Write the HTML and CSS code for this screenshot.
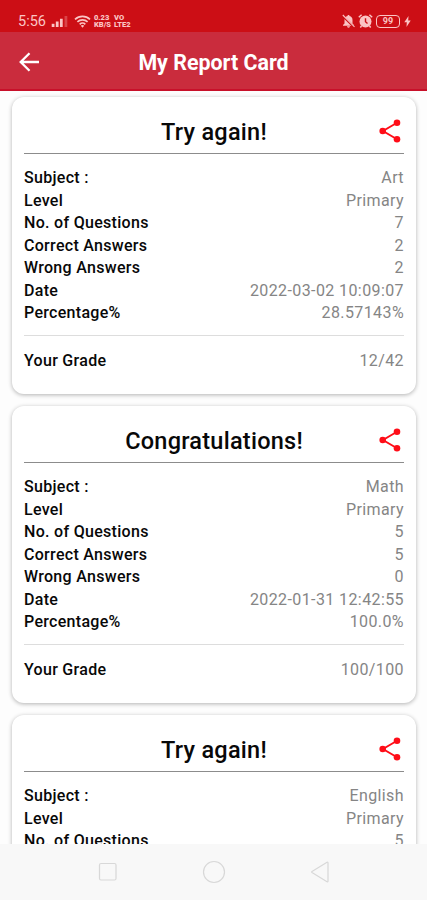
FILE: index.html
```html
<!DOCTYPE html>
<html lang="en">

<head>
    <meta charset="UTF-8">
    <title>My Report Card</title>
    <link rel="stylesheet" href="styles.css">
</head>

<body>
    <div class="status-bar">
        <span class="time">5:56</span>
        <svg class="signal" width="17" height="11" viewBox="0 0 17 12">
            <rect x="0" y="8.500" width="3" height="3.500" />
            <rect x="4.500" y="6" width="3" height="6" />
            <rect x="9" y="3" width="3" height="9" />
            <rect x="14" y="0" width="3" height="12" opacity="0.3" />
        </svg>
        <svg class="wifi" width="17" height="13" viewBox="0 0 17 13">
            <g fill="none" stroke="#fbc4c4" stroke-width="1.700">
                <path d="M1 4.300a11 11 0 0 1 15 0" />
                <path d="M3.400 6.900a7.400 7.400 0 0 1 10.200 0" />
                <path d="M5.700 9.300a4 4 0 0 1 5.600 0" />
            </g>
            <path d="M6.800 10.800a2.400 2.400 0 0 1 3.400 0L8.500 12.800z" />
        </svg>
        <div class="tiny speed"><span>0.23</span><span>KB/S</span></div>
        <div class="tiny lte"><span>VO</span><span>LTE2</span></div>
        <svg class="mute" width="13" height="14" viewBox="0 0 13 14">
            <path d="M6.500 1c.7 0 1 .4 1 1 2 .5 3 2 3 4v3.500l1.500 1.500v.7H1V11l1.500-1.500V6c0-2 1-3.500 3-4 0-.6.3-1 1-1z" />
            <path d="M5 12.300h3c0 .8-.6 1.400-1.500 1.400S5 13.100 5 12.300z" />
            <path d="M.8 2l11.200 11" stroke="#cc0e15" stroke-width="2.200" />
            <path d="M.8 1l11.700 11.800" stroke="#fbc4c4" stroke-width="1.100" />
        </svg>
        <svg class="alarm" width="15" height="14" viewBox="0 0 15 14">
            <circle cx="7.500" cy="7.500" r="6" />
            <path d="M.8 3.300L3.600.8M14.200 3.300L11.400.8M3.500 12L2.300 13.500M11.500 12l1.200 1.500" stroke="#fbc4c4" stroke-width="1.500" />
            <path d="M7.500 4.200v3.600l2 1.700" fill="none" stroke="#cc0e15" stroke-width="1.400" />
        </svg>
        <div class="battery">99</div>
        <svg class="bolt" width="7" height="11" viewBox="0 0 7 11">
            <path d="M4.500 0L.3 6.200h2.500L2.500 11l4.200-6.400H4.200z" />
        </svg>
    </div>

    <header class="app-bar">
        <svg class="back" width="22" height="22" viewBox="0 0 22 22">
            <path d="M21 11H3M11.500 2.200L2.700 11l8.800 8.800" fill="none" stroke="#fff" stroke-width="2.300" />
        </svg>
        <h1>My Report Card</h1>
    </header>

    <main id="reports"></main>

    <nav class="nav-bar">
        <svg width="20" height="20" viewBox="0 0 20 20">
            <rect x="1.500" y="1.500" width="16.500" height="16.500" rx="1.500" />
        </svg>
        <svg width="24" height="24" viewBox="0 0 24 24">
            <circle cx="12" cy="12" r="10.500" />
        </svg>
        <svg width="20" height="22" viewBox="0 0 20 22">
            <path d="M18 1.800v18.400q0 1-1 .5L2 11.600q-.8-.6 0-1.200L17 1.300q1-.5 1 .5z" />
        </svg>
    </nav>

    <script>
        const reports = [
            { title: 'Try again!', subject: 'Art', level: 'Primary', questions: 7, correct: 2, wrong: 2, date: '2022-03-02 10:09:07', percentage: '28.57143%', grade: '12/42' },
            { title: 'Congratulations!', subject: 'Math', level: 'Primary', questions: 5, correct: 5, wrong: 0, date: '2022-01-31 12:42:55', percentage: '100.0%', grade: '100/100' },
            { title: 'Try again!', subject: 'English', level: 'Primary', questions: 5 }
        ];

        const labels = [
            ['subject', 'Subject :'],
            ['level', 'Level'],
            ['questions', 'No. of Questions'],
            ['correct', 'Correct Answers'],
            ['wrong', 'Wrong Answers'],
            ['date', 'Date'],
            ['percentage', 'Percentage%']
        ];

        const shareIcon = `
            <svg class="share" width="22" height="24" viewBox="0 0 22 24">
                <path d="M18 3.800L4 12l14 8.200" fill="none" stroke="#ff0d18" stroke-width="1.900" />
                <circle cx="18" cy="3.800" r="3.300" />
                <circle cx="3.700" cy="12" r="3.300" />
                <circle cx="18" cy="20.200" r="3.300" />
            </svg>`;

        function row(label, value) {
            return `<div class="row"><span class="label">${label}</span><span class="value">${value}</span></div>`;
        }

        function card(report) {
            const rows = labels
                .filter(([key]) => report[key] !== undefined)
                .map(([key, label]) => row(label, report[key]))
                .join('');
            const grade = report.grade ? `<div class="grade">${row('Your Grade', report.grade)}</div>` : '';
            return `
                <section class="card">
                    <div class="card-head"><h2>${report.title}</h2>${shareIcon}</div>
                    <div class="rows">${rows}</div>
                    ${grade}
                </section>`;
        }

        document.getElementById('reports').innerHTML = reports.map(card).join('');
    </script>
</body>

</html>
```
FILE: styles.css
```css
* {
    box-sizing: border-box;
}

body {
    margin: 0;
    height: 900px;
    display: flex;
    flex-direction: column;
    overflow: hidden;
    background-color: #fdfdfd;
    font-family: Roboto, sans-serif;
}

.status-bar {
    display: flex;
    align-items: center;
    flex: none;
    height: 32px;
    padding: 10px 16px 0 18px;
    background-color: #cc0e15;
    color: #fbc4c4;
    fill: #fbc4c4;
}

.time {
    width: 33px;
    font-size: 14.5px;
}

.wifi {
    margin-left: 6px;
}

.tiny {
    display: flex;
    flex-direction: column;
    font-size: 7.5px;
    line-height: 7px;
    font-weight: 900;
}

.speed {
    width: 18px;
    margin-left: 3px;
}

.lte {
    margin-left: 2px;
}

.mute {
    margin-left: auto;
}

.alarm {
    margin-left: 3px;
}

.battery {
    width: 24px;
    height: 13px;
    margin-left: 3px;
    border: 1.5px solid #fbc4c4;
    border-radius: 4px;
    font-size: 9px;
    line-height: 10px;
    font-weight: bold;
    text-align: center;
}

.bolt {
    margin-left: 4px;
}

.app-bar {
    display: grid;
    grid-template-columns: 1fr auto 1fr;
    align-items: center;
    flex: none;
    height: 59px;
    padding: 2px 18px 0;
    background-color: #ca2c3d;
    border-bottom: 2px solid #c8102a;
}

.app-bar h1 {
    margin: 2px 0 0;
    color: #fff;
    font-size: 21.4px;
    font-weight: bold;
}

#reports {
    flex: 1;
    min-height: 0;
    overflow: hidden;
    display: flex;
    flex-direction: column;
    gap: 12px;
    padding: 6px 11px 0 12px;
}

.card {
    flex: none;
    height: 297px;
    padding: 0 12px;
    border-radius: 12px;
    background-color: #fff;
    box-shadow: 0 1px 4px rgba(0, 0, 0, 0.3);
}

.card-head {
    display: grid;
    grid-template-columns: 1fr auto 1fr;
    align-items: center;
    height: 57px;
    padding-top: 14px;
    border-bottom: 1.5px solid #8c8c8c;
}

.card-head h2 {
    grid-column: 2;
    margin: 0;
    font-size: 23.5px;
    font-weight: 500;
    letter-spacing: 0.25px;
    color: #080808;
}

.share {
    justify-self: end;
    margin-right: 3px;
    margin-bottom: 2px;
    fill: #ff0d18;
}

.rows {
    padding: 13.3px 0 10.2px;
}

.row {
    display: flex;
    justify-content: space-between;
    font-size: 16px;
    line-height: 22.5px;
    letter-spacing: 0.4px;
}

.label {
    color: #080808;
    font-weight: 500;
    letter-spacing: 0.3px;
}

.value {
    color: #858585;
}

.grade {
    padding-top: 14px;
    border-top: 1px solid #ddd;
}

.nav-bar {
    display: flex;
    align-items: center;
    justify-content: space-between;
    flex: none;
    height: 56px;
    padding: 0 97px 0 98px;
    background-color: #f8f8f8;
    fill: none;
    stroke: #d8d8d8;
    stroke-width: 1.2;
}
```
